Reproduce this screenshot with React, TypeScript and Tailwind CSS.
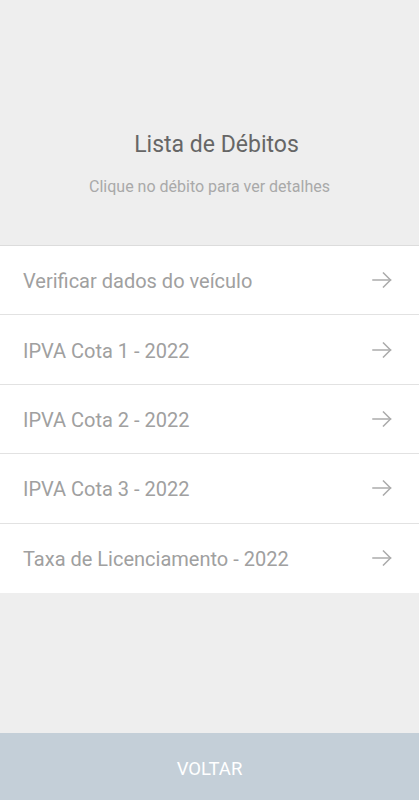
import React from "react";

const items = [
  "Verificar dados do veículo",
  "IPVA Cota 1 - 2022",
  "IPVA Cota 2 - 2022",
  "IPVA Cota 3 - 2022",
  "Taxa de Licenciamento - 2022",
];

function Arrow() {
  return (
    <svg width="20" height="16" viewBox="0 0 20 16" fill="none" stroke="#ababab" strokeWidth="1.5" strokeLinecap="square">
      <path d="M1 8 H18.5" />
      <path d="M11.5 1 L18.5 8 L11.5 15" />
    </svg>
  );
}

export default function App() {
  return (
    <div className="flex h-[800px] w-full flex-col bg-[#eeeeee]" style={{ fontFamily: "Roboto, 'Noto Sans', sans-serif" }}>
      <div className="flex flex-col items-center pt-[130px]">
        <h1 className="pl-[14px] text-[23px] leading-[30px] text-[#666666]">Lista de Débitos</h1>
        <p className="mt-[16px] text-[16px] leading-[22px] text-[#a9a9a9]">Clique no débito para ver detalhes</p>
      </div>
      <div className="mt-[47px] border-t border-[#dcdcdc] bg-white">
        {items.map((t, i) => (
          <div
            key={t}
            className={`flex h-[69.4px] items-center justify-between pl-[23px] pr-[27px] ${i < items.length - 1 ? "border-b border-[#e2e2e2]" : ""}`}
          >
            <span className="pt-[2px] text-[20px] text-[#a0a0a0]">{t}</span>
            <Arrow />
          </div>
        ))}
      </div>
      <div className="flex-1" />
      <div className="flex h-[67px] items-center justify-center bg-[#c4cfd8] pt-[7px]">
        <span className="text-[18.5px] text-white">VOLTAR</span>
      </div>
    </div>
  );
}
